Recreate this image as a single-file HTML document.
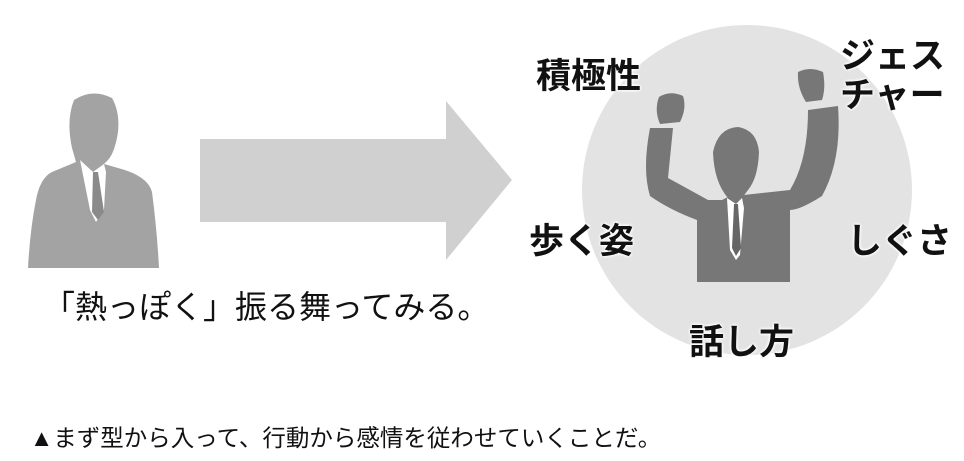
<!DOCTYPE html>
<html><head><meta charset="utf-8"><style>
body{margin:0;width:964px;height:461px;background:#fff;position:relative;overflow:hidden;font-family:"Liberation Sans","Noto Sans CJK JP",sans-serif;}
.t{position:absolute;white-space:nowrap;color:#111;}
.b{font-weight:bold;font-size:35px;line-height:38px;text-shadow:0 0 3px #fff,0 0 3px #fff,0 0 3px #fff;}
</style></head><body>
<svg width="964" height="461" style="position:absolute;left:0;top:0">
<circle cx="747" cy="190" r="165" fill="#e3e3e3"/>
<g fill="#a3a3a3">
<path d="M74 100 Q92 88 112 98 Q120 112 118 132 Q115 152 108 160 L104 164 L118 168 Q148 176 152 192 Q157 230 159 268 L28 268 Q30 230 36 200 Q40 178 52 172 L76 162 L72 148 Q66 120 74 100 Z"/>
</g>
<path d="M80 160 L93 172 L104 164 L106 172 L104 210 L96 222 L90 210 Z" fill="#fff"/>
<path d="M93 172 L98 172 L104 212 L98 220 L92 212 Z" fill="#8a8a8a"/>
<path d="M200 139 L446 139 L446 101 L512 180 L446 260 L446 222 L200 222 Z" fill="#d0d0d0"/>
<g fill="#777">
<path d="M659 97 Q670 90 683 96 Q687 108 680 122 L660 124 Q654 110 659 97 Z"/>
<path d="M798 72 Q810 66 823 72 Q826 88 822 100 L806 102 Q797 88 798 72 Z"/>
<path d="M650 128 L673 128 L668 178 Q690 190 708 200 L722 200 L732 195 L744 195 L790 190 Q808 160 808 110 L838 106 Q842 160 822 196 Q800 210 790 210 L790 282 L697 282 L697 220 Q670 210 650 196 Q642 170 650 128 Z"/>
<path d="M713 152 Q718 128 738 127 Q757 130 759 152 Q758 178 748 190 L742 198 L728 198 Q714 182 713 152 Z"/>
</g>
<path d="M727 198 L736 204 L742 198 L744 208 L740 255 L736 260 L730 250 Z" fill="#fff"/>
<path d="M734 204 L738 204 L741 248 L736 256 L732 248 Z" fill="#666"/>
</svg>
<div class="t" style="left:43px;top:288px;font-size:32px;line-height:38px">「熱っぽく」振る舞ってみる。</div>
<div class="t" style="left:30px;top:424px;font-size:23.5px;line-height:28px">▲まず型から入って、行動から感情を従わせていくことだ。</div>
<div class="t b" style="left:536px;top:58px">積極性</div>
<div class="t b" style="left:840px;top:37px;line-height:39px">ジェス<br>チャー</div>
<div class="t b" style="left:529px;top:223px">歩く姿</div>
<div class="t b" style="left:847px;top:223px">しぐさ</div>
<div class="t b" style="left:689px;top:324px">話し方</div>
</body></html>
